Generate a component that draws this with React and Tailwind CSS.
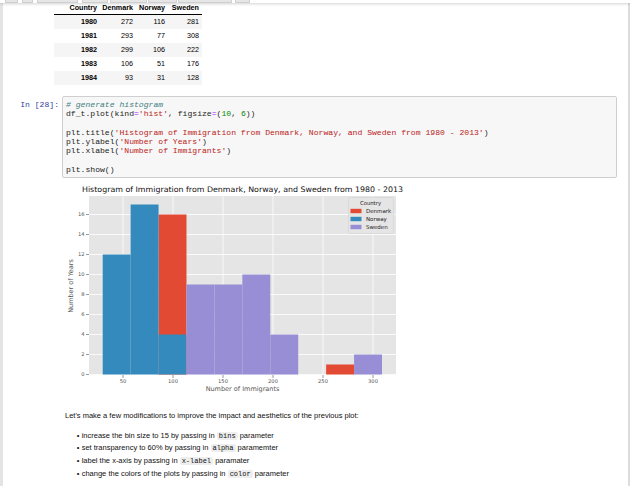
import React from 'react';

const rows = [
  ['1980', 272, 116, 281],
  ['1981', 293, 77, 308],
  ['1982', 299, 106, 222],
  ['1983', 106, 51, 176],
  ['1984', 93, 31, 128],
];

const toolbarButtons = [
  [5, 13], [4, 11], [4, 41], [4, 26], [2, 37], [1, 29], [1, 54], [3, 15],
];

// histogram geometry, in page pixels
const edges = Array.from({ length: 11 }, (_, i) => 102.7 + 27.93 * i);
const Y = (v) => 374.5 - 10 * v;
const X = (v) => 73 + v;

const bars = [
  // Denmark
  { bin: 2, h: 16, fill: '#E24A33' },
  { bin: 8, h: 1, fill: '#E24A33' },
  // Norway
  { bin: 0, h: 12, fill: '#348ABD' },
  { bin: 1, h: 17, fill: '#348ABD' },
  { bin: 2, h: 4, fill: '#348ABD' },
  // Sweden
  { bin: 3, h: 9, fill: '#988ED5' },
  { bin: 4, h: 9, fill: '#988ED5' },
  { bin: 5, h: 10, fill: '#988ED5' },
  { bin: 6, h: 4, fill: '#988ED5' },
  { bin: 9, h: 2, fill: '#988ED5' },
];

const yTicks = [0, 2, 4, 6, 8, 10, 12, 14, 16];
const xTicks = [50, 100, 150, 200, 250, 300];

const Histogram = () => (
  <svg width="350" height="215" className="block ml-[57px]" style={{ fontFamily: '"DejaVu Sans", sans-serif' }}>
    <g transform="translate(-60,-180)">
      <text x="242.5" y="190" fontSize="7.6" fill="#111" textAnchor="middle" dominantBaseline="middle" textLength="321" lengthAdjust="spacingAndGlyphs">
        Histogram of Immigration from Denmark, Norway, and Sweden from 1980 - 2013
      </text>

      {/* plot area + grid */}
      <rect x="89" y="196" width="307" height="179" fill="#E5E5E5" />
      {yTicks.map((v) => (
        <line key={v} x1="89" x2="396" y1={Y(v)} y2={Y(v)} stroke="#fff" strokeWidth="0.8" />
      ))}
      {xTicks.map((v) => (
        <line key={v} x1={X(v)} x2={X(v)} y1="196" y2="375" stroke="#fff" strokeWidth="0.8" />
      ))}

      {bars.map((b, i) => (
        <rect
          key={i}
          x={edges[b.bin]}
          y={Y(b.h)}
          width={edges[b.bin + 1] - edges[b.bin]}
          height={10 * b.h}
          fill={b.fill}
        />
      ))}

      {/* y axis */}
      {yTicks.map((v) => (
        <g key={v}>
          <line x1="86" x2="89" y1={Y(v)} y2={Y(v)} stroke="#555" strokeWidth="0.6" />
          <text x="84.5" y={Y(v)} fontSize="5.2" fill="#555" textAnchor="end" dominantBaseline="middle">{v}</text>
        </g>
      ))}
      {/* x axis */}
      {xTicks.map((v) => (
        <g key={v}>
          <line x1={X(v)} x2={X(v)} y1="375" y2="378" stroke="#555" strokeWidth="0.6" />
          <text x={X(v)} y="381.5" fontSize="5.2" fill="#555" textAnchor="middle" dominantBaseline="middle">{v}</text>
        </g>
      ))}

      <text x="242.5" y="389" fontSize="6.5" fill="#555" textAnchor="middle" dominantBaseline="middle">Number of Immigrants</text>
      <text x="71.5" y="286" fontSize="6.5" fill="#555" textAnchor="middle" dominantBaseline="middle" transform="rotate(-90 71.5 286)">Number of Years</text>

      {/* legend */}
      <rect x="348.5" y="197.5" width="45" height="36" rx="1" fill="#E5E5E5" stroke="#cfcfcf" strokeWidth="0.5" />
      <text x="370.5" y="203.5" fontSize="5.3" fill="#222" textAnchor="middle" dominantBaseline="middle">Country</text>
      {[['Denmark', '#E24A33', 211], ['Norway', '#348ABD', 219], ['Sweden', '#988ED5', 227]].map(([name, c, y]) => (
        <g key={name}>
          <rect x="350.5" y={y - 2.2} width="11" height="4.4" fill={c} />
          <text x="366" y={y} fontSize="5.5" fill="#222" dominantBaseline="middle">{name}</text>
        </g>
      ))}
    </g>
  </svg>
);

const Code = ({ children }) => (
  <code className="bg-[#eeeeee] px-[2px] rounded-[2px] text-[7px] font-['Liberation_Mono',monospace]">{children}</code>
);

const Bullet = ({ children }) => (
  <li className="flex">
    <span className="w-[5px] shrink-0">•</span>
    <span>{children}</span>
  </li>
);

export default function App() {
  return (
    <div className="w-[630px] h-[486px] overflow-hidden bg-white font-['Liberation_Sans',Arial,sans-serif] text-black">
      {/* cut-off toolbar */}
      <div className="relative z-10 h-[3px] flex bg-white shadow-[0_1px_3px_rgba(0,0,0,0.18)]">
        {toolbarButtons.map(([ml, w], i) => (
          <div
            key={i}
            style={{ marginLeft: ml, width: w }}
            className="h-[3px] bg-[#e6e6e6] border-x border-b border-[#cfcfcf] rounded-b-[1px]"
          />
        ))}
      </div>

      <div className="flex h-[483px]">
        <div className="w-[3px] bg-[#e4e4e4]" />
        <div className="w-[625px] bg-white">
          {/* dataframe */}
          <div className="ml-[51px] w-[148px] text-[7.2px]">
            <div className="grid grid-cols-[46px_36px_32px_34px] h-[12px] leading-[9px] font-bold border-b border-black text-right">
              <div className="pr-[3px]">Country</div>
              <div className="pr-[3px]">Denmark</div>
              <div className="pr-[3px]">Norway</div>
              <div className="pr-[3px]">Sweden</div>
            </div>
            {rows.map(([year, d, n, s], i) => (
              <div
                key={year}
                className={`grid grid-cols-[46px_36px_32px_34px] h-[14px] items-center text-right ${i % 2 === 0 ? 'bg-[#f5f5f5]' : 'bg-white'}`}
              >
                <div className="pr-[3px] font-bold">{year}</div>
                <div className="pr-[3px]">{d}</div>
                <div className="pr-[3px]">{n}</div>
                <div className="pr-[3px]">{s}</div>
              </div>
            ))}
          </div>

          {/* code cell */}
          <div className="flex mt-[11px] font-['Liberation_Mono',monospace] text-[8.1px] leading-[9.3px]">
            <div className="w-[59px] pr-[3px] pt-[4px] text-right text-[#303F9F] whitespace-pre">In [28]:</div>
            <div className="w-[555px] bg-[#f7f7f7] border border-[#cfcfcf] rounded-[2px] px-[3px] py-[3px] whitespace-pre text-[#222]">
              <div className="italic text-[#408080]"># generate histogram</div>
              <div>
                df_t.plot(kind<span className="text-[#AA22FF]">=</span>
                <span className="text-[#BA2121]">'hist'</span>, figsize<span className="text-[#AA22FF]">=</span>(
                <span className="text-[#008800]">10</span>, <span className="text-[#008800]">6</span>))
              </div>
              <div>&nbsp;</div>
              <div>
                plt.title(<span className="text-[#BA2121]">'Histogram of Immigration from Denmark, Norway, and Sweden from 1980 - 2013'</span>)
              </div>
              <div>
                plt.ylabel(<span className="text-[#BA2121]">'Number of Years'</span>)
              </div>
              <div>
                plt.xlabel(<span className="text-[#BA2121]">'Number of Immigrants'</span>)
              </div>
              <div>&nbsp;</div>
              <div>plt.show()</div>
            </div>
          </div>

          {/* output */}
          <div className="mt-[2px]">
            <Histogram />
          </div>

          {/* markdown */}
          <div className="ml-[62px] mt-[15px] text-[7.5px] leading-[11.7px] text-[#111]">
            <p>Let's make a few modifications to improve the impact and aesthetics of the previous plot:</p>
            <ul className="ml-[11.7px] mt-[7.6px] leading-[11.8px]">
              <Bullet>increase the bin size to 15 by passing in <Code>bins</Code> parameter</Bullet>
              <Bullet>set transparency to 60% by passing in <Code>alpha</Code> paramemter</Bullet>
              <Bullet>label the x-axis by passing in <Code>x-label</Code> paramater</Bullet>
              <Bullet>change the colors of the plots by passing in <Code>color</Code> parameter</Bullet>
            </ul>
          </div>
        </div>
        <div className="w-[2px] bg-[#dcdcdc]" />
      </div>
    </div>
  );
}
